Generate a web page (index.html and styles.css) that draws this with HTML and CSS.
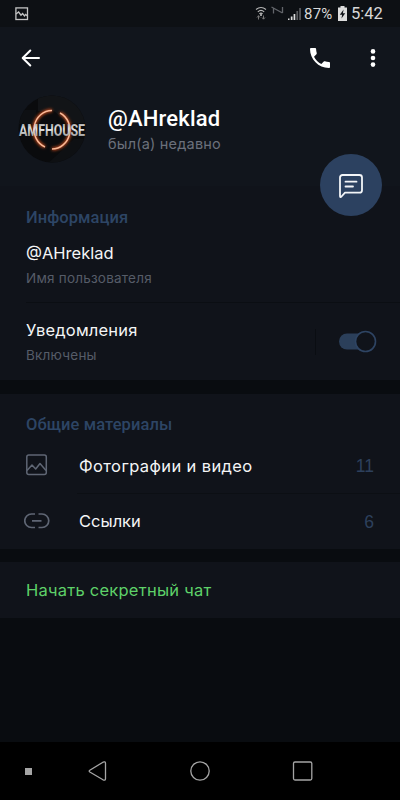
FILE: index.html
```html
<!DOCTYPE html>
<html lang="ru">
<head>
<meta charset="utf-8">
<title>@AHreklad</title>
<link rel="stylesheet" href="styles.css">
</head>
<body>
<div class="phone">
  <div class="status">
    <svg class="status-photo" width="14" height="14" viewBox="0 0 14 14" fill="none" stroke="#c4c4c4" stroke-width="1.300"><rect x=".9" y=".9" width="11.600" height="11.600"/><path d="M1 7l2.600-2L6 8.200l1.600-1.600L9.500 9l1.200-1.600L12.500 9"/></svg>
    <div class="status-right">
      <svg width="48" height="18" viewBox="0 0 48 18" fill="none">
        <g stroke="#b8b8b8" stroke-width="1.100"><path d="M1 4.500Q6 .5 11 4.500M2.800 6.800Q6 4 9.200 6.800M4.400 8.800Q6 7.400 7.600 8.800"/></g>
        <circle cx="6" cy="10" r="1" fill="#c8c8c8"/>
        <path d="M3.500 14.500v-4M2 12.500l1.500-1.700L5 12.500M8.500 10.500v3.500M7 12.500l1.500 1.700 1.500-1.700" stroke="#777"/>
        <path d="M16.500 2l11 6M18.500 3.500v5M27.500 2v6" stroke="#62656a" stroke-width="1.300"/>
        <path d="M33 13.500h1.500V15H33zM35.800 11.500h1.700V15h-1.700zM38.600 9h1.700v6h-1.700z" fill="#ddd"/>
        <path d="M41.400 6h1.700v9h-1.700zM44.200 3h1.700v12h-1.700z" fill="#5b5d61"/>
      </svg>
      <span class="percent">87%</span>
      <svg class="battery" width="9" height="15" viewBox="0 0 9 15"><path d="M2.500 0h4v1.600H9V15H0V1.600h2.500z" fill="#ddd"/><path d="M5.600 3.500L1.800 8.700h2.300L3.500 12.500l3.700-5.200H4.900z" fill="#111419"/></svg>
      <span class="clock">5:42</span>
    </div>
  </div>

  <header class="header">
    <div class="toolbar">
      <svg width="20" height="18" viewBox="0 0 20 18" fill="none" stroke="#fff" stroke-width="2" stroke-linecap="round" stroke-linejoin="round"><path d="M18 9H2M9.300 1.500L1.700 9l7.600 7.500"/></svg>
      <svg class="call" width="20" height="20" viewBox="3 3 18 18" fill="#fff"><path d="M6.620 10.790c1.440 2.830 3.760 5.140 6.590 6.590l2.200-2.200c.27-.27.67-.36 1.020-.24 1.120.37 2.330.57 3.570.57.55 0 1 .45 1 1V20c0 .55-.45 1-1 1-9.390 0-17-7.610-17-17 0-.55.45-1 1-1h3.500c.55 0 1 .45 1 1 0 1.250.2 2.450.57 3.570.11.35.03.74-.25 1.020l-2.200 2.200z"/></svg>
      <svg width="6" height="18" viewBox="0 0 6 18" fill="#fff"><circle cx="3" cy="2.400" r="2.300"/><circle cx="3" cy="9" r="2.300"/><circle cx="3" cy="15.600" r="2.300"/></svg>
    </div>
    <div class="profile">
      <svg class="avatar" width="72" height="68" viewBox="-2 0 72 68">
        <defs>
          <clipPath id="round"><circle cx="34" cy="34" r="33.500"/></clipPath>
          <filter id="glow" x="-30%" y="-30%" width="160%" height="160%"><feGaussianBlur stdDeviation="1.500"/></filter>
          <linearGradient id="metal" x1="0" y1="0" x2="0" y2="1"><stop offset="0" stop-color="#888"/><stop offset=".45" stop-color="#e4e4e4"/><stop offset="1" stop-color="#777"/></linearGradient>
        </defs>
        <g clip-path="url(#round)">
          <rect width="68" height="68" fill="#0a0b0d"/>
          <path d="M20 0h48v28H50L36 16H20z" fill="#121417"/>
          <path d="M0 15h18v14H0zM56 44h12v24H30l8-7z" fill="#0e1013"/>
          <g fill="none" stroke="#c94b1c" stroke-width="3" filter="url(#glow)"><path d="M34 15.500A18 19 0 0 0 27 52M42 18a18 19 0 0 1-8 36"/></g>
          <g fill="none" stroke="#f9b896" stroke-width="1.500"><path d="M34 15.500A18 19 0 0 0 27 52M42 18a18 19 0 0 1-8 36"/></g>
        </g>
        <text class="avatar-text" x="1" y="41" textLength="66" lengthAdjust="spacingAndGlyphs" fill="url(#metal)">AMFHOUSE</text>
      </svg>
      <div class="who">
        <div class="name">@AHreklad</div>
        <div class="seen">был(а) недавно</div>
      </div>
    </div>
    <div class="fab">
      <svg width="26" height="26" viewBox="0 0 26 26" fill="none" stroke="#f3f5f8" stroke-width="1.800" stroke-linecap="round" stroke-linejoin="round"><path d="M2 24V5.500A2.500 2.500 0 0 1 4.500 3h17A2.500 2.500 0 0 1 24 5.500v12.700a2.500 2.500 0 0 1-2.500 2.500H7L3.500 24.500Q2 25.800 2 24zM7.500 9.700H18.500M7.500 14.500H15"/></svg>
    </div>
  </header>

  <section class="card info">
    <h2 class="heading">Информация</h2>
    <div class="title handle">@AHreklad</div>
    <div class="sub">Имя пользователя</div>
    <div class="notify">
      <div class="notify-text">
        <div class="title notice">Уведомления</div>
        <div class="sub state">Включены</div>
      </div>
      <div class="switch">
        <svg width="39" height="23" viewBox="0 0 39 23"><rect x="0" y="3.500" width="34" height="16" rx="8" fill="#2b3f5a"/><circle cx="26.500" cy="11.500" r="10" fill="#10131a" stroke="#2e4463" stroke-width="1.600"/></svg>
      </div>
    </div>
  </section>

  <section class="card media">
    <h2 class="heading shared">Общие материалы</h2>
    <div class="row">
      <svg width="24" height="22" viewBox="0 0 24 22" fill="none" stroke="#5f6674" stroke-width="1.500" stroke-linejoin="round"><rect x="1.800" y="1" width="19.500" height="19.500" rx="2"/><path d="M2 16.500l5-5.500 3.700 4L15 9.500l6 7"/></svg>
      <span class="title photos">Фотографии и видео</span>
      <span class="count">11</span>
    </div>
    <div class="row second">
      <svg width="26" height="18" viewBox="0 0 26 18" fill="none" stroke="#5f6674" stroke-width="1.700"><path d="M11 2H7.500a6.700 6.700 0 0 0 0 13.500H11M14.500 2H18a6.700 6.700 0 0 1 0 13.500h-3.500M8 8.800h9.500"/></svg>
      <span class="title links">Ссылки</span>
      <span class="count">6</span>
    </div>
  </section>

  <section class="card secret"><span>Начать секретный чат</span></section>

  <nav class="nav">
    <svg width="400" height="58" viewBox="0 0 400 58" fill="none" stroke="#a5a5a5" stroke-width="1.300" stroke-linejoin="round">
      <rect x="25" y="26" width="7" height="7" fill="#a5a5a5" stroke="none"/>
      <path d="M89.800 28.200L103 20.200q2.500-1.200 2.500 1v15.600q0 2.200-2.500 1L89.800 30q-1.300-.9 0-1.800z"/>
      <circle cx="200" cy="29" r="9.200"/>
      <rect x="293.500" y="20" width="18.300" height="18" rx="1.500"/>
    </svg>
  </nav>
</div>
</body>
</html>
```
FILE: styles.css
```css
* { box-sizing: border-box; }
body { margin: 0; background: #090c10; font-family: Inter, sans-serif; color: #f4f5f6; }
svg { display: block; flex: none; }
.phone { width: 400px; height: 800px; display: flex; flex-direction: column; overflow: hidden; }

.status { height: 27px; background: #0d1014; display: flex; justify-content: space-between; padding: 0 17px 0 15px; flex: none; }
.status-photo { margin-top: 7px; }
.status-right { display: flex; padding-top: 5px; font: 15.500px/18px Roboto, sans-serif; color: #d8d8d8; }
.percent { width: 30px; margin-left: 1px; white-space: nowrap; font-size: 15px; letter-spacing: .2px; }
.battery { margin: 1px 4px 0 4px; }
.clock { width: 32px; white-space: nowrap; font-size: 16.500px; }

.header { position: relative; height: 159px; background: #11151c; flex: none; }
.toolbar { display: flex; align-items: center; height: 62px; padding: 0 24px 0 21px; }
.call { margin-left: auto; margin-right: 40px; }
.profile { display: flex; padding: 6px 0 0 16px; }
.who { margin-left: 20px; padding-top: 10px; white-space: nowrap; }
.name { font: 500 22px/28px Roboto, sans-serif; color: #fff; letter-spacing: .2px; }
.seen { font-size: 14.500px; line-height: 22px; color: #6b707b; letter-spacing: .2px; }
.avatar-text { font: 700 17px Roboto, sans-serif; }
.fab { position: absolute; left: 320px; top: 127px; width: 62px; height: 62px; border-radius: 50%; background: #2c4160; display: grid; place-items: center; }

.card { background: #10131a; flex: none; white-space: nowrap; }
.heading { margin: 0; font: 500 16.500px/22px Roboto, sans-serif; color: #2d4565; letter-spacing: .08px; }
.title { font-size: 16.500px; line-height: 22px; }
.sub { margin-top: 5px; font-size: 13.500px; line-height: 18px; color: #565c68; letter-spacing: .22px; }
.info { height: 194px; padding: 21px 0 0 26px; }
.handle { margin-top: 13px; }
.notice { letter-spacing: .2px; }
.notify { display: flex; justify-content: space-between; margin-top: 15px; padding-top: 16px; border-top: 1px solid #0b0e13; }
.switch { width: 85px; height: 26px; margin-top: 10px; padding: 1px 0 0 23px; border-left: 1px solid #0a0d12; }
.media { height: 155px; margin-top: 14px; padding: 20px 0 0 25px; }
.shared { padding-left: 1px; }
.row { display: flex; align-items: center; height: 57px; padding-right: 26px; }
.row .title { width: 200px; margin-left: 30px; }
.row .photos { letter-spacing: .38px; padding-top: 2px; }
.row.second { height: 55px; background: linear-gradient(#0c0f14, #0c0f14) 52px 0 / 100% 1px no-repeat; }
.row.second svg { margin-left: -1px; }
.row.second .title { margin-left: 29px; padding-top: 1px; }
.count { margin-left: auto; padding-top: 2px; font: 17.500px/22px "Liberation Sans", sans-serif; color: #2d405c; }
.secret { height: 56px; margin-top: 13px; padding-left: 26px; font-size: 16.500px; line-height: 57px; letter-spacing: .24px; color: #5ed169; }
.nav { margin-top: auto; height: 58px; background: #000; }
```
